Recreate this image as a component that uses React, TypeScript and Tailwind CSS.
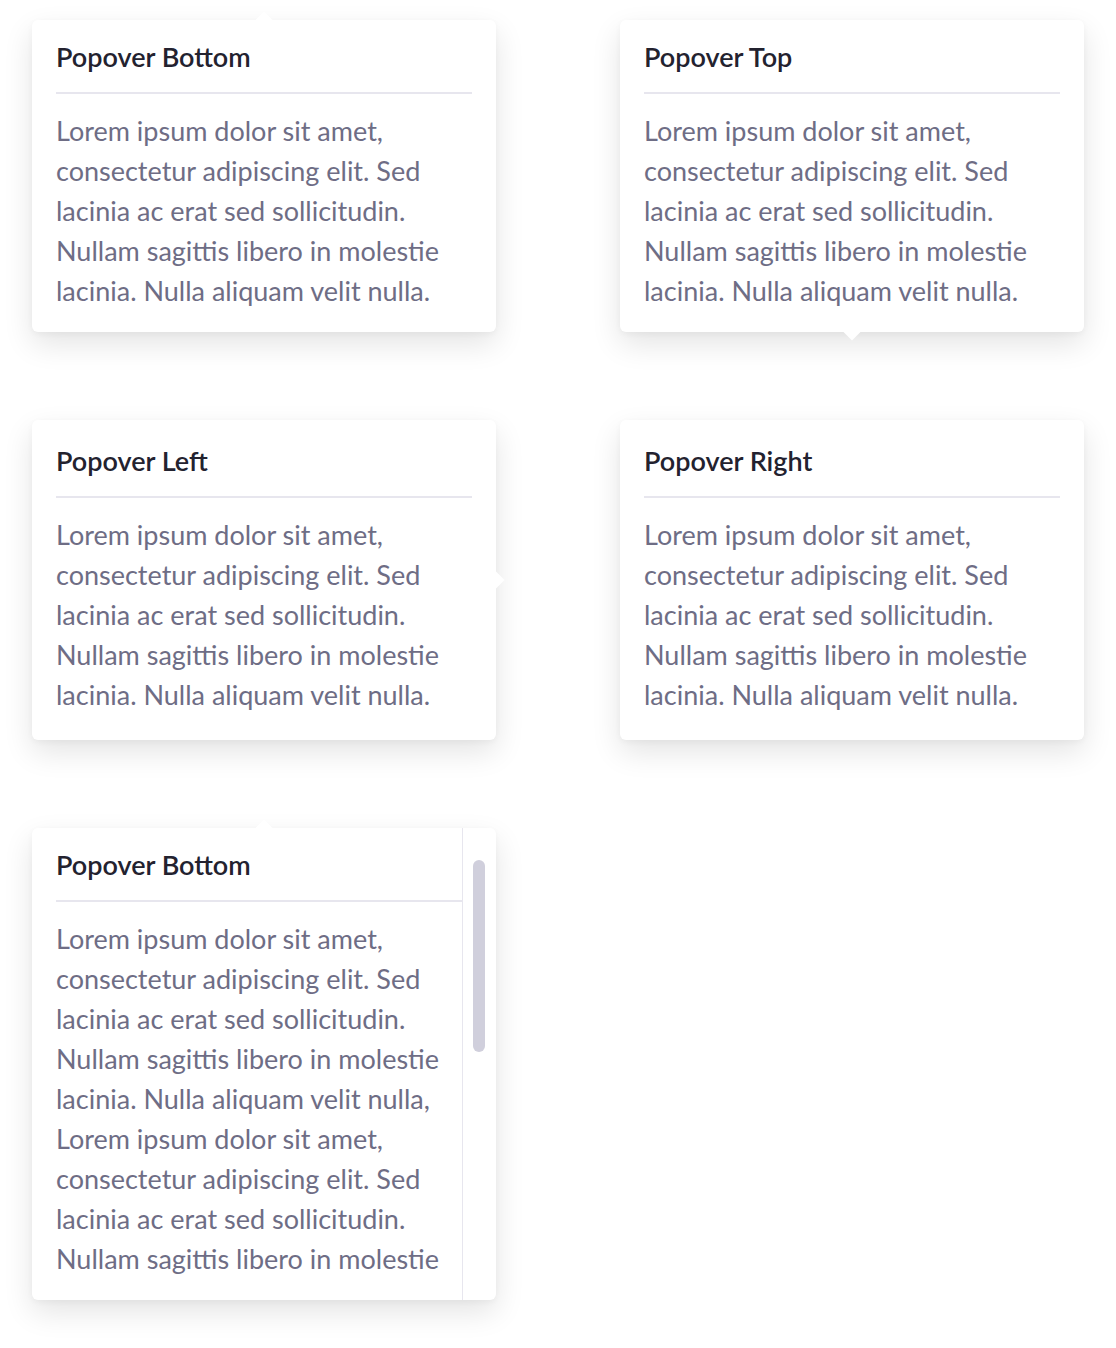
import React from 'react';

const lines = [
  'Lorem ipsum dolor sit amet,',
  'consectetur adipiscing elit. Sed',
  'lacinia ac erat sed sollicitudin.',
  'Nullam sagittis libero in molestie',
  'lacinia. Nulla aliquam velit nulla.',
];

const longLines = [
  'Lorem ipsum dolor sit amet,',
  'consectetur adipiscing elit. Sed',
  'lacinia ac erat sed sollicitudin.',
  'Nullam sagittis libero in molestie',
  'lacinia. Nulla aliquam velit nulla,',
  'Lorem ipsum dolor sit amet,',
  'consectetur adipiscing elit. Sed',
  'lacinia ac erat sed sollicitudin.',
  'Nullam sagittis libero in molestie',
  'lacinia. Nulla aliquam velit nulla.',
];

const font = { fontFamily: '"Lato", "Noto Sans", sans-serif' };

function Body({ items }: { items: string[] }) {
  return (
    <div className="mt-[17px] text-[27px] leading-[40px] text-[#6e6d85]">
      {items.map((l, i) => (
        <div key={i} className="whitespace-nowrap">{l}</div>
      ))}
    </div>
  );
}

function Title({ children }: { children: React.ReactNode }) {
  return (
    <>
      <div className="text-[27px] leading-[36px] font-semibold text-[#23222f]">{children}</div>
      <div className="mt-[17px] h-[2px] bg-[#e7e6ee]" />
    </>
  );
}

const card = 'relative w-[464px] rounded-md bg-white shadow-[0_12px_30px_rgba(0,0,0,0.11),0_2px_6px_rgba(0,0,0,0.04)]';

export default function App() {
  return (
    <div className="min-h-[1348px] bg-white pt-5 pl-8" style={font}>
      <div className="grid grid-cols-[464px_464px] gap-x-[124px] gap-y-[88px]">
        {/* bottom */}
        <div className={card}>
          <div className="absolute -top-[6px] left-[226px] h-3 w-3 rotate-45 bg-white" />
          <div className="relative px-6 pt-[19px] pb-[21px]">
            <Title>Popover Bottom</Title>
            <Body items={lines} />
          </div>
        </div>

        {/* top */}
        <div className={card}>
          <div className="absolute -bottom-[6px] left-[226px] h-3 w-3 rotate-45 bg-white" />
          <div className="relative px-6 pt-[19px] pb-[21px]">
            <Title>Popover Top</Title>
            <Body items={lines} />
          </div>
        </div>

        {/* left */}
        <div className={card}>
          <div className="absolute top-[154px] -right-[6px] h-3 w-3 rotate-45 bg-white" />
          <div className="relative px-6 pt-[23px] pb-[25px]">
            <Title>Popover Left</Title>
            <Body items={lines} />
          </div>
        </div>

        {/* right */}
        <div className={card}>
          <div className="relative px-6 pt-[23px] pb-[25px]">
            <Title>Popover Right</Title>
            <Body items={lines} />
          </div>
        </div>

        {/* scrollable bottom */}
        <div className={card + ' h-[472px]'}>
          <div className="absolute -top-[6px] left-[226px] h-3 w-3 rotate-45 bg-white" />
          <div className="relative flex h-full overflow-hidden rounded-md">
            <div className="w-[431px] border-r border-[#e7e6ee]">
              <div className="h-[452px] overflow-hidden pl-6 pt-[19px]">
                <Title>Popover Bottom</Title>
                <Body items={longLines} />
              </div>
            </div>
            <div className="flex w-[32px] justify-center pt-8">
              <div className="h-[192px] w-3 rounded-full bg-[#d0cfdc]" />
            </div>
          </div>
        </div>
      </div>
    </div>
  );
}
